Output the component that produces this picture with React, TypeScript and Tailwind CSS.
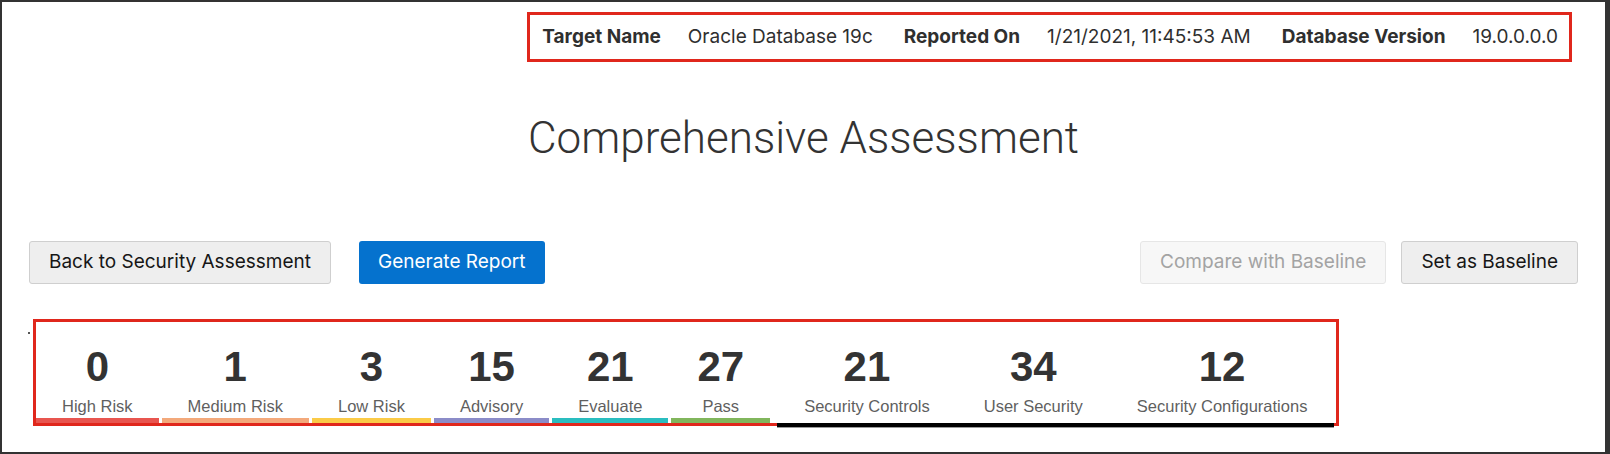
const META = [
  { label: "Target Name", value: "Oracle Database 19c" },
  { label: "Reported On", value: "1/21/2021, 11:45:53 AM" },
  { label: "Database Version", value: "19.0.0.0.0" },
];

const RISKS = [
  { count: 0, label: "High Risk", bar: "border-[#e8554f]" },
  { count: 1, label: "Medium Risk", bar: "border-[#f3a97b]" },
  { count: 3, label: "Low Risk", bar: "border-[#fbcb47]" },
  { count: 15, label: "Advisory", bar: "border-[#8b8cc8]" },
  { count: 21, label: "Evaluate", bar: "border-[#2abdbf]" },
  { count: 27, label: "Pass", bar: "border-[#81b65c]" },
];

const AREAS = [
  { count: 21, label: "Security Controls" },
  { count: 34, label: "User Security" },
  { count: 12, label: "Security Configurations" },
];

export default function App() {
  return (
    <div className="w-[1610px] h-[454px] bg-white border-2 border-r-[5px] border-[#333333] flex flex-col font-['Liberation_Sans',Arial,sans-serif] text-[#333333] overflow-hidden">
      {/* target summary */}
      <div className="flex justify-end pt-[10px] pr-[33px]">
        <div className="h-[50px] border-[3px] border-[#e0271c] flex items-center pl-[12px] pr-[11px] font-['Inter',sans-serif] text-[19px] text-[#2f2f2f] whitespace-nowrap">
          {META.map((m, i) => (
            <div key={m.label} className="flex items-center">
              <span className={`font-bold mr-[27px] ${i > 0 ? "ml-[31px]" : ""}`}>{m.label}</span>
              <span>{m.value}</span>
            </div>
          ))}
        </div>
      </div>

      <h1 className="mt-[54px] text-center text-[44px] leading-none font-light font-['Roboto',sans-serif] text-[#333333]">
        Comprehensive Assessment
      </h1>

      {/* actions */}
      <div className="mt-[81px] flex items-center px-[27px] font-['Inter',sans-serif] text-[19px]">
        <button className="h-[43px] px-[19px] rounded-[3px] border border-[#cfcfcf] bg-[#eeeeee] text-[#161616]">
          Back to Security Assessment
        </button>
        <button className="ml-[28px] h-[43px] px-[19px] rounded-[3px] bg-[#0572ce] text-white">
          Generate Report
        </button>
        <div className="flex-1" />
        <button disabled className="h-[43px] px-[19px] rounded-[3px] border border-[#e6e6e6] bg-[#f7f7f7] text-[#a3a3a3]">
          Compare with Baseline
        </button>
        <button className="ml-[15px] h-[43px] px-[19px] rounded-[3px] border border-[#cfcfcf] bg-[#eeeeee] text-[#161616]">
          Set as Baseline
        </button>
      </div>

      {/* summary counts */}
      <div className="mt-[35px] flex items-start">
        <div className="ml-[26px] mt-[13px] w-[2px] h-[2px] bg-[#555555]" />
        <div className="ml-[3px] w-fit border-[3px] border-[#e0271c] flex items-start pr-[2px]">
          <div className="flex gap-[3px]">
            {RISKS.map((r) => (
              <div
                key={r.label}
                className={`min-w-[97px] flex flex-col items-center px-[26px] pt-[24px] pb-[3px] border-b-[5px] ${r.bar}`}
              >
                <span className="text-[42px] leading-none font-bold">{r.count}</span>
                <span className="mt-[10px] text-[16.5px] leading-none text-[#5f5f5f] whitespace-nowrap">{r.label}</span>
              </div>
            ))}
          </div>
          <div className="ml-[7px] -mb-[4px] flex shadow-[0_1px_0_#9a9a9a]">
            {AREAS.map((a) => (
              <div
                key={a.label}
                className="flex flex-col items-center px-[27px] pt-[24px] pb-[8px] border-b-4 border-black"
              >
                <span className="text-[42px] leading-none font-bold">{a.count}</span>
                <span className="mt-[10px] text-[16.5px] leading-none text-[#5f5f5f] whitespace-nowrap">{a.label}</span>
              </div>
            ))}
          </div>
        </div>
      </div>
    </div>
  );
}
